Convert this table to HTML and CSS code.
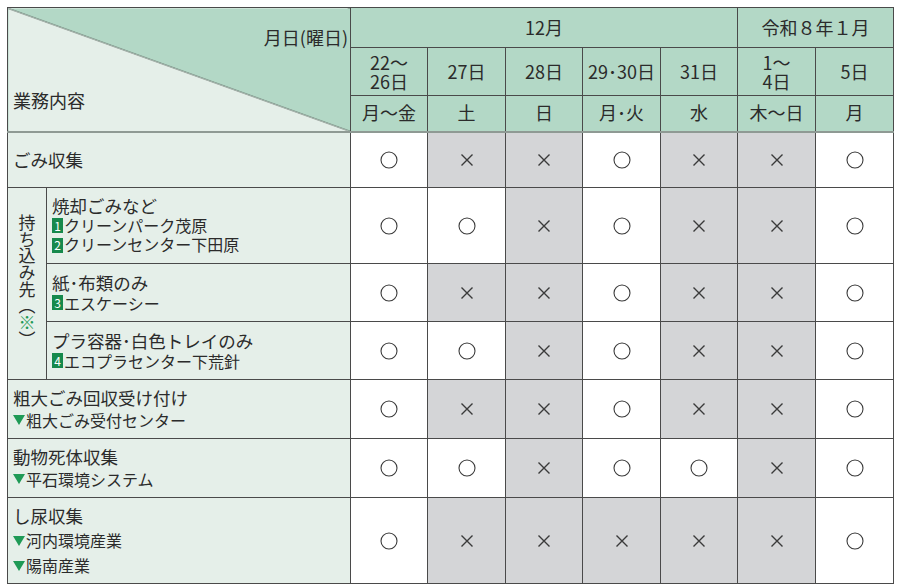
FILE: index.html
```html
<!DOCTYPE html>
<html lang="ja">
<head>
<meta charset="utf-8">
<title>年末年始の業務日程</title>
<link rel="stylesheet" href="styles.css">
</head>
<body>
<table class="sched">
  <colgroup>
    <col class="c-side"><col class="c-label">
    <col class="c-a"><col class="c-b"><col class="c-a"><col class="c-b"><col class="c-a"><col class="c-b"><col class="c-b">
  </colgroup>
  <thead>
    <tr class="h1">
      <th class="diag" rowspan="3" colspan="2">
        <div class="diag-inner">
          <span class="diag-top">月日(曜日)</span>
          <span class="diag-bot">業務内容</span>
        </div>
      </th>
      <th colspan="5">12月</th>
      <th colspan="2">令和８年１月</th>
    </tr>
    <tr class="h2">
      <th class="two"><div>22〜</div><div>26日</div></th>
      <th>27日</th>
      <th>28日</th>
      <th>29･30日</th>
      <th>31日</th>
      <th class="two"><div>1〜</div><div>4日</div></th>
      <th>5日</th>
    </tr>
    <tr class="h3">
      <th>月〜金</th>
      <th>土</th>
      <th>日</th>
      <th>月･火</th>
      <th>水</th>
      <th>木〜日</th>
      <th>月</th>
    </tr>
  </thead>
  <tbody>
    <tr class="r-gomi">
      <td class="lbl" colspan="2"><span class="main">ごみ収集</span></td>
      <td class="o"><svg class="mk" viewBox="0 0 18 18"><circle cx="9" cy="9" r="8"/></svg></td>
      <td class="x"><svg class="mk" viewBox="0 0 18 18"><path d="M3.5 3.5 L14.5 14.5 M14.5 3.5 L3.5 14.5"/></svg></td>
      <td class="x"><svg class="mk" viewBox="0 0 18 18"><path d="M3.5 3.5 L14.5 14.5 M14.5 3.5 L3.5 14.5"/></svg></td>
      <td class="o"><svg class="mk" viewBox="0 0 18 18"><circle cx="9" cy="9" r="8"/></svg></td>
      <td class="x"><svg class="mk" viewBox="0 0 18 18"><path d="M3.5 3.5 L14.5 14.5 M14.5 3.5 L3.5 14.5"/></svg></td>
      <td class="x"><svg class="mk" viewBox="0 0 18 18"><path d="M3.5 3.5 L14.5 14.5 M14.5 3.5 L3.5 14.5"/></svg></td>
      <td class="o"><svg class="mk" viewBox="0 0 18 18"><circle cx="9" cy="9" r="8"/></svg></td>
    </tr>
    <tr class="r-shoukyaku">
      <td class="side" rowspan="3"><span class="vert">持ち込み先（<span class="kome">※</span>）</span></td>
      <td class="lbl sub3">
        <div class="main">焼却ごみなど</div>
        <div class="sub"><span class="num">1</span>クリーンパーク茂原</div>
        <div class="sub"><span class="num">2</span>クリーンセンター下田原</div>
      </td>
      <td class="o"><svg class="mk" viewBox="0 0 18 18"><circle cx="9" cy="9" r="8"/></svg></td>
      <td class="o"><svg class="mk" viewBox="0 0 18 18"><circle cx="9" cy="9" r="8"/></svg></td>
      <td class="x"><svg class="mk" viewBox="0 0 18 18"><path d="M3.5 3.5 L14.5 14.5 M14.5 3.5 L3.5 14.5"/></svg></td>
      <td class="o"><svg class="mk" viewBox="0 0 18 18"><circle cx="9" cy="9" r="8"/></svg></td>
      <td class="x"><svg class="mk" viewBox="0 0 18 18"><path d="M3.5 3.5 L14.5 14.5 M14.5 3.5 L3.5 14.5"/></svg></td>
      <td class="x"><svg class="mk" viewBox="0 0 18 18"><path d="M3.5 3.5 L14.5 14.5 M14.5 3.5 L3.5 14.5"/></svg></td>
      <td class="o"><svg class="mk" viewBox="0 0 18 18"><circle cx="9" cy="9" r="8"/></svg></td>
    </tr>
    <tr class="r-kami">
      <td class="lbl sub2">
        <div class="main">紙･布類のみ</div>
        <div class="sub"><span class="num">3</span>エスケーシー</div>
      </td>
      <td class="o"><svg class="mk" viewBox="0 0 18 18"><circle cx="9" cy="9" r="8"/></svg></td>
      <td class="x"><svg class="mk" viewBox="0 0 18 18"><path d="M3.5 3.5 L14.5 14.5 M14.5 3.5 L3.5 14.5"/></svg></td>
      <td class="x"><svg class="mk" viewBox="0 0 18 18"><path d="M3.5 3.5 L14.5 14.5 M14.5 3.5 L3.5 14.5"/></svg></td>
      <td class="o"><svg class="mk" viewBox="0 0 18 18"><circle cx="9" cy="9" r="8"/></svg></td>
      <td class="x"><svg class="mk" viewBox="0 0 18 18"><path d="M3.5 3.5 L14.5 14.5 M14.5 3.5 L3.5 14.5"/></svg></td>
      <td class="x"><svg class="mk" viewBox="0 0 18 18"><path d="M3.5 3.5 L14.5 14.5 M14.5 3.5 L3.5 14.5"/></svg></td>
      <td class="o"><svg class="mk" viewBox="0 0 18 18"><circle cx="9" cy="9" r="8"/></svg></td>
    </tr>
    <tr class="r-pura">
      <td class="lbl sub2">
        <div class="main">プラ容器･白色トレイのみ</div>
        <div class="sub"><span class="num">4</span>エコプラセンター下荒針</div>
      </td>
      <td class="o"><svg class="mk" viewBox="0 0 18 18"><circle cx="9" cy="9" r="8"/></svg></td>
      <td class="o"><svg class="mk" viewBox="0 0 18 18"><circle cx="9" cy="9" r="8"/></svg></td>
      <td class="x"><svg class="mk" viewBox="0 0 18 18"><path d="M3.5 3.5 L14.5 14.5 M14.5 3.5 L3.5 14.5"/></svg></td>
      <td class="o"><svg class="mk" viewBox="0 0 18 18"><circle cx="9" cy="9" r="8"/></svg></td>
      <td class="x"><svg class="mk" viewBox="0 0 18 18"><path d="M3.5 3.5 L14.5 14.5 M14.5 3.5 L3.5 14.5"/></svg></td>
      <td class="x"><svg class="mk" viewBox="0 0 18 18"><path d="M3.5 3.5 L14.5 14.5 M14.5 3.5 L3.5 14.5"/></svg></td>
      <td class="o"><svg class="mk" viewBox="0 0 18 18"><circle cx="9" cy="9" r="8"/></svg></td>
    </tr>
    <tr class="r-sodai">
      <td class="lbl tri2" colspan="2">
        <div class="main">粗大ごみ回収受け付け</div>
        <div class="sub"><span class="tri"></span>粗大ごみ受付センター</div>
      </td>
      <td class="o"><svg class="mk" viewBox="0 0 18 18"><circle cx="9" cy="9" r="8"/></svg></td>
      <td class="x"><svg class="mk" viewBox="0 0 18 18"><path d="M3.5 3.5 L14.5 14.5 M14.5 3.5 L3.5 14.5"/></svg></td>
      <td class="x"><svg class="mk" viewBox="0 0 18 18"><path d="M3.5 3.5 L14.5 14.5 M14.5 3.5 L3.5 14.5"/></svg></td>
      <td class="o"><svg class="mk" viewBox="0 0 18 18"><circle cx="9" cy="9" r="8"/></svg></td>
      <td class="x"><svg class="mk" viewBox="0 0 18 18"><path d="M3.5 3.5 L14.5 14.5 M14.5 3.5 L3.5 14.5"/></svg></td>
      <td class="x"><svg class="mk" viewBox="0 0 18 18"><path d="M3.5 3.5 L14.5 14.5 M14.5 3.5 L3.5 14.5"/></svg></td>
      <td class="o"><svg class="mk" viewBox="0 0 18 18"><circle cx="9" cy="9" r="8"/></svg></td>
    </tr>
    <tr class="r-doubutsu">
      <td class="lbl tri2" colspan="2">
        <div class="main">動物死体収集</div>
        <div class="sub"><span class="tri"></span>平石環境システム</div>
      </td>
      <td class="o"><svg class="mk" viewBox="0 0 18 18"><circle cx="9" cy="9" r="8"/></svg></td>
      <td class="o"><svg class="mk" viewBox="0 0 18 18"><circle cx="9" cy="9" r="8"/></svg></td>
      <td class="x"><svg class="mk" viewBox="0 0 18 18"><path d="M3.5 3.5 L14.5 14.5 M14.5 3.5 L3.5 14.5"/></svg></td>
      <td class="o"><svg class="mk" viewBox="0 0 18 18"><circle cx="9" cy="9" r="8"/></svg></td>
      <td class="o"><svg class="mk" viewBox="0 0 18 18"><circle cx="9" cy="9" r="8"/></svg></td>
      <td class="x"><svg class="mk" viewBox="0 0 18 18"><path d="M3.5 3.5 L14.5 14.5 M14.5 3.5 L3.5 14.5"/></svg></td>
      <td class="o"><svg class="mk" viewBox="0 0 18 18"><circle cx="9" cy="9" r="8"/></svg></td>
    </tr>
    <tr class="r-shinyou">
      <td class="lbl tri3" colspan="2">
        <div class="main">し尿収集</div>
        <div class="sub"><span class="tri"></span>河内環境産業</div>
        <div class="sub"><span class="tri"></span>陽南産業</div>
      </td>
      <td class="o"><svg class="mk" viewBox="0 0 18 18"><circle cx="9" cy="9" r="8"/></svg></td>
      <td class="x"><svg class="mk" viewBox="0 0 18 18"><path d="M3.5 3.5 L14.5 14.5 M14.5 3.5 L3.5 14.5"/></svg></td>
      <td class="x"><svg class="mk" viewBox="0 0 18 18"><path d="M3.5 3.5 L14.5 14.5 M14.5 3.5 L3.5 14.5"/></svg></td>
      <td class="x"><svg class="mk" viewBox="0 0 18 18"><path d="M3.5 3.5 L14.5 14.5 M14.5 3.5 L3.5 14.5"/></svg></td>
      <td class="x"><svg class="mk" viewBox="0 0 18 18"><path d="M3.5 3.5 L14.5 14.5 M14.5 3.5 L3.5 14.5"/></svg></td>
      <td class="x"><svg class="mk" viewBox="0 0 18 18"><path d="M3.5 3.5 L14.5 14.5 M14.5 3.5 L3.5 14.5"/></svg></td>
      <td class="o"><svg class="mk" viewBox="0 0 18 18"><circle cx="9" cy="9" r="8"/></svg></td>
    </tr>
  </tbody>
</table>
</body>
</html>
```

FILE: styles.css
```css
* { box-sizing: border-box; }

html, body {
  margin: 0;
  background: #ffffff;
}

body {
  padding: 7px 0 0 7px;
  font-family: "Noto Sans CJK JP", "Noto Sans", sans-serif;
  color: #2b2b2b;
}

.sched {
  border-collapse: collapse;
  table-layout: fixed;
  width: 887px;
  border-top: 1px solid #3a3a3a;
  border-left: 1px solid #3a3a3a;
  border-right: 1px solid #8a8a8a;
  border-bottom: 1px solid #8a8a8a;
}

.c-side { width: 39px; }
.c-label { width: 304px; }
.c-a { width: 77px; }
.c-b { width: 78px; }

.sched th,
.sched td {
  border: 1px solid #4a4a4a;
  padding: 0;
}

/* header */
.sched thead th {
  background: #b3d8c6;
  font-weight: normal;
  font-size: 18px;
  text-align: center;
  vertical-align: middle;
  line-height: 1.1;
}

.h1 { height: 40px; }
.h2 { height: 48px; }
.h3 { height: 36px; }

.h3 th { border-bottom: 2px solid #8f9a94; }

.h2 .two { line-height: 19px; }

.sched thead th.diag {
  padding: 0;
  background: linear-gradient(to top right, #e5efe9 calc(50% - 0.7px), #4d5550 50%, #b3d8c6 calc(50% + 0.7px));
  border-bottom: 2px solid #8f9a94;
}

.diag-inner {
  height: 122px;
  display: flex;
  flex-direction: column;
  justify-content: space-between;
  padding: 20px 2px 19px 5px;
}

.diag-top { align-self: flex-end; }
.diag-bot { align-self: flex-start; }

/* body rows */
.r-gomi { height: 56px; }
.r-shoukyaku { height: 76px; }
.r-kami { height: 58px; }
.r-pura { height: 58px; }
.r-sodai { height: 59px; }
.r-doubutsu { height: 59px; }
.r-shinyou { height: 86px; }

.lbl {
  background: #e5efe9;
  text-align: left;
  vertical-align: middle;
  padding-left: 5px !important;
  font-size: 17.5px;
}

.main { font-size: 17.5px; }
.sub { font-size: 16px; display: flex; align-items: center; }

.sub3 { line-height: 19.5px; }
.sub2 { line-height: 20px; }
.tri2 { line-height: 22px; }
.tri3 { line-height: 25px; }

.side {
  background: #e5efe9;
  text-align: center;
  vertical-align: middle;
}

.vert {
  writing-mode: vertical-rl;
  font-size: 17px;
  line-height: 1;
  display: inline-block;
  letter-spacing: -0.3px;
}

.kome { color: #1f9a56; }

.num {
  display: inline-flex;
  align-items: center;
  justify-content: center;
  width: 11px;
  height: 15px;
  margin-right: 1px;
  background: #16894c;
  color: #ffffff;
  font-size: 12px;
  line-height: 1;
}

.tri {
  display: inline-block;
  width: 0;
  height: 0;
  border-left: 6px solid transparent;
  border-right: 6px solid transparent;
  border-top: 10px solid #1f9a56;
  margin-right: 1px;
}

/* mark cells */
.o, .x {
  text-align: center;
  vertical-align: middle;
}

.o { background: #ffffff; }
.x { background: #d4d5d7; }

.mk {
  display: block;
  margin: 0 auto;
  width: 18px;
  height: 18px;
  fill: none;
  stroke: #3a3a3a;
}

.o .mk { stroke-width: 1.1; }
.x .mk { stroke-width: 1.4; }
```
